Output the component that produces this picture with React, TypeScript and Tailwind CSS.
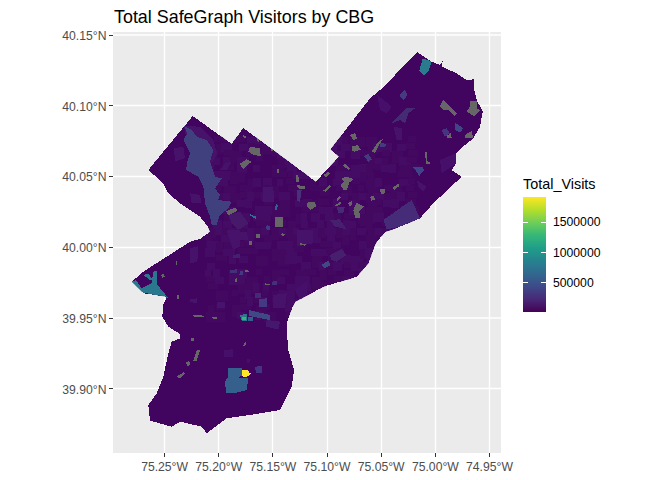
type Patch = [number, number, string, string]

const OUTLINE =
  '192.7,116 231.7,144 243.3,128 300,170 315.7,181.7 339,156.7 330.7,149.3 370,98.3 380,90 395,75 417.3,52.3 431.7,61.7 440,65 442.7,60.7 441.7,66.7 456.7,73.3 466.7,80 474.3,79.3 474,88.3 476.7,100 482.7,111.7 480,126.7 473.3,138.3 463,146.7 456,154 456,163.3 451.7,170 461.7,176.7 433.3,203.3 420,218.3 400,226.7 385,232 380,238 375.7,243 368.3,263.3 356.7,276.7 340,281.7 323.3,286.7 308.3,295 295,301.7 290,313.3 287.3,321.7 286.7,330 288.3,350 294,370 291.7,386.7 280,410 250,415 226.7,418.3 206.7,433.3 201.7,426.7 180,421.7 171.7,426.7 150,420.7 148.3,405 156.7,393.3 163.3,376.7 168.3,353.3 171.7,341.7 180,338.3 180,334 168.3,326.7 162.3,316.7 163.3,305 166.7,296.7 155,295 143.3,293.3 131.7,281.7 143.3,271.7 166.7,256.7 190,241.7 200,239 210,231.7 208,226.7 200,216.7 180,203.3 168,193 163,183 148.3,170'

const GREY = '#666666'

// coordinates are read off 3x crops: [crop x, crop y, colour, points]
const PATCHES: Patch[] = [
  // northwest
  [100, 30, '#46126a', '252,288 300,290 340,330 352,372 335,400 300,400 262,340'],
  [100, 30, '#46126a', '222,355 250,350 255,385 225,395'],
  [100, 30, '#46126a', '270,490 300,495 305,520 275,520'],
  [100, 30, '#41407f', '252,288 275,300 290,320 320,330 340,360 330,395 345,440 365,445 345,475 360,495 355,510 395,515 385,535 360,555 350,585 335,585 330,560 315,520 310,470 295,440 258,420 262,395 270,370 250,330 262,310'],
  [100, 30, '#47196b', '385,555 420,545 445,580 415,600 395,580'],
  [100, 30, '#46146b', '490,470 520,470 522,515 490,515'],
  [100, 30, '#48307a', '590,480 605,480 600,515 590,512'],
  [100, 30, '#443a83', '500,585 512,590 510,600 498,598'],
  [100, 30, '#46126a', '375,400 395,395 380,420 360,420'],
  [100, 30, '#46126a', '400,610 440,605 445,630 400,630'],
  [100, 30, '#2d7190', '450,552 468,560 470,568 452,558'],
  [100, 30, '#35608d', '528,522 534,525 530,540 524,540'],
  // northeast
  [300, 30, '#46106a', '232,195 275,230 260,250 240,240'],
  [300, 30, '#46126a', '280,290 305,295 305,330 290,330'],
  [300, 30, '#46106a', '420,390 468,370 468,400 425,430'],
  [300, 30, '#46126a', '350,450 380,470 370,485 355,470'],
  [300, 30, '#463a80', '298,195 315,180 322,195 310,212'],
  [300, 30, '#452a74', '275,280 320,235 345,235 325,250 315,280 300,270'],
  [300, 30, '#3f4488', '340,412 368,410 372,420 358,438'],
  [300, 30, '#414487', '465,278 490,295 480,308 465,300'],
  [300, 30, '#43367f', '425,300 440,295 450,310 435,320'],
  [300, 30, '#463a80', '238,335 262,345 250,352 240,350'],
  [300, 30, '#443a80', '192,378 205,372 216,388 205,395'],
  [300, 30, '#462b78', '250,570 335,510 360,565 300,590 260,598'],
  [300, 30, '#46206f', '90,570 120,568 140,598 105,590'],
  [300, 30, '#462a75', '110,530 135,530 130,548 115,548'],
  [300, 30, '#2a7b8e', '368,85 395,95 385,125 372,137 358,122'],
  // south and west
  [100, 230, '#46126a', '270,55 295,48 292,95 270,100'],
  [100, 230, '#46126a', '380,0 420,0 420,50 400,60'],
  [100, 230, '#46176e', '500,270 540,275 535,298 497,290'],
  [100, 230, '#443a83', '478,208 500,205 502,232 478,232'],
  [100, 230, '#45307a', '395,120 412,118 412,130 395,130'],
  [100, 230, '#45307a', '420,125 430,122 430,135 420,135'],
  [100, 230, '#452a78', '465,190 482,190 482,205 465,205'],
  [100, 230, '#46146c', '350,215 375,215 375,235 350,235'],
  [100, 230, '#46126a', '520,195 560,190 555,235 525,235'],
  [100, 230, '#46106a', '372,360 398,358 398,382 372,382'],
  [100, 230, '#443483', '465,410 485,408 485,428 468,430'],
  [100, 230, '#46106a', '440,388 450,388 448,400 440,400'],
  [100, 230, '#45307a', '515,155 530,153 530,165 515,165'],
  [100, 230, '#46146c', '270,208 290,205 290,220 270,215'],
  [100, 230, '#3f4a85', '447,240 510,255 510,270 447,258'],
  [100, 230, '#35608d', '445,262 458,262 458,272 445,272'],
  [100, 230, '#2a788e', '420,255 440,252 440,272 425,272'],
  [100, 230, '#35b779', '427,260 438,260 438,270 427,270'],
  [100, 230, '#2a788e', '95,155 108,150 125,175 155,160 160,125 170,122 172,165 190,185 205,205 165,195 130,188 105,175'],
  [100, 230, '#2a788e', '130,135 145,130 158,150 150,150'],
  [100, 230, '#35608d', '385,413 425,413 426,438 410,442 445,445 440,480 410,488 378,488 375,455 385,440'],
  [100, 230, '#fde725', '426,420 445,420 447,428 453,430 445,438 432,442 426,435'],
  // centre and river edge
  [230, 230, '#3f4a85', '275,105 295,92 302,105 285,115'],
  [230, 230, '#46206f', '300,75 335,58 350,75 320,95 305,90'],
  [230, 230, '#45307a', '125,155 142,152 140,165 125,165'],
  [230, 230, '#46126a', '200,0 250,0 250,40 200,50'],
  [230, 230, '#46126a', '130,200 165,195 165,235 130,235'],
  [230, 230, '#46106a', '195,180 235,150 230,195 210,210'],
  [230, 230, '#45206f', '8,75 30,72 30,85 10,85'],
  [230, 230, '#45307a', '0,120 20,118 22,130 0,130'],
  [230, 230, '#443a83', '30,125 38,122 38,135 28,135'],
  // no-data tracts
  [100, 30, GREY, '450,350 480,355 482,378 462,375 445,365'],
  [100, 30, GREY, '418,402 440,388 455,395 430,416'],
  [100, 30, GREY, '530,420 538,415 538,428 530,428'],
  [100, 30, GREY, '590,430 598,445 595,458 588,455'],
  [100, 30, GREY, '590,465 612,468 612,478 595,475'],
  [100, 30, GREY, '622,518 630,515 630,530 622,528'],
  [100, 30, GREY, '525,562 548,562 548,592 525,590'],
  [100, 30, GREY, '378,545 405,532 412,542 385,556'],
  [100, 30, GREY, '468,612 480,612 480,624 468,624'],
  [100, 30, GREY, '428,315 438,320 436,325 430,322'],
  [100, 30, GREY, '470,330 478,325 475,338'],
  [100, 30, GREY, '510,355 520,360 515,365'],
  [100, 30, GREY, '545,610 555,612 552,618 544,616'],
  [300, 30, GREY, '430,208 445,225 470,250 465,258 445,240 430,240 420,228'],
  [300, 30, GREY, '510,212 530,212 530,235 540,240 522,258 500,245 510,230'],
  [300, 30, GREY, '495,315 515,303 520,325 495,325'],
  [300, 30, GREY, '440,318 452,310 456,325 442,325'],
  [300, 30, GREY, '375,365 380,365 380,390 392,400 378,403'],
  [300, 30, GREY, '150,315 165,310 172,325 160,330'],
  [300, 30, GREY, '155,350 172,345 183,358 165,365 155,362'],
  [300, 30, GREY, '215,365 235,335 250,325 240,340 225,368'],
  [300, 30, GREY, '128,405 135,402 150,415 145,420'],
  [300, 30, GREY, '70,435 85,425 90,432 78,443'],
  [300, 30, GREY, '125,445 140,440 160,447 148,458 140,480 130,480 122,465 132,455'],
  [300, 30, GREY, '70,482 88,465 92,470 76,486'],
  [300, 30, GREY, '0,468 15,468 15,478 0,478'],
  [300, 30, GREY, '240,478 255,478 255,490 243,492'],
  [300, 30, GREY, '278,472 295,462 298,468 282,480'],
  [300, 30, GREY, '210,500 222,498 225,508 214,512'],
  [300, 30, GREY, '110,508 120,498 122,503 113,513'],
  [300, 30, GREY, '105,525 122,515 125,520 108,530'],
  [300, 30, GREY, '145,520 155,512 157,525 148,528'],
  [300, 30, GREY, '20,518 45,515 48,530 30,540 22,532'],
  [300, 30, GREY, '170,518 192,530 178,545 180,565 165,563 160,540'],
  [100, 230, GREY, '184,135 190,130 194,140 186,145'],
  [100, 230, GREY, '228,95 232,90 232,105 228,105'],
  [100, 230, GREY, '232,195 238,195 238,208 232,208'],
  [100, 230, GREY, '280,255 315,257 310,262 282,262'],
  [100, 230, GREY, '337,260 350,262 350,268 338,268'],
  [100, 230, GREY, '272,325 280,322 282,332 274,332'],
  [100, 230, GREY, '290,362 300,360 290,392 280,392'],
  [100, 230, GREY, '258,398 268,392 270,405 262,408'],
  [100, 230, GREY, '230,440 250,427 255,430 240,445'],
  [100, 230, GREY, '432,340 438,335 436,348 430,348'],
  [100, 230, GREY, '404,148 412,143 412,155 405,158'],
  [100, 230, GREY, '468,12 480,12 480,24 468,24'],
  [100, 230, GREY, '448,33 456,33 456,46 448,46'],
  [100, 230, GREY, '545,10 555,12 552,18 545,16'],
  [100, 230, GREY, '600,40 618,42 616,47 602,45'],
  [100, 230, GREY, '435,120 447,122 445,126 435,125'],
  [100, 230, GREY, '495,160 510,162 508,166 497,165'],
]

const toPage = (ox: number, oy: number, pts: string) =>
  pts
    .split(' ')
    .map((p) => {
      const [x, y] = p.split(',').map(Number)
      return `${ox + x / 3},${oy + y / 3}`
    })
    .join(' ')

// faint block-group mosaic over the dense centre
const MOSAIC: { x: number; y: number; w: number; h: number; c: string }[] = []
for (let gx = 0; gx < 26; gx++) {
  for (let gy = 0; gy < 26; gy++) {
    const hash = (gx * 73 + gy * 151 + gx * gy * 17) % 97
    if (hash % 3 === 0) continue
    MOSAIC.push({
      x: 205 + gx * 8 + (hash % 4),
      y: 135 + gy * 7 + (hash % 3),
      w: 6 + (hash % 7),
      h: 5 + (hash % 6),
      c: hash % 2 ? '#430860' : '#450c65',
    })
  }
}

const GRID_X = [164.5, 218.5, 272.5, 327.5, 381.5, 435.5, 489.5]
const GRID_Y = [35, 105.5, 176.5, 247.5, 318, 388.5]
const LAT = ['40.15°N', '40.10°N', '40.05°N', '40.00°N', '39.95°N', '39.90°N']
const LON = ['75.25°W', '75.20°W', '75.15°W', '75.10°W', '75.05°W', '75.00°W', '74.95°W']
const LEGEND = ['1500000', '1000000', '500000']

function MapPanel() {
  return (
    <svg viewBox="113 32 388 421" className="block w-[388px] h-[421px] bg-[#ebebeb]">
      <defs>
        <clipPath id="city">
          <polygon points={OUTLINE} />
        </clipPath>
      </defs>
      {GRID_X.map((x) => (
        <line key={x} x1={x} x2={x} y1={32} y2={453} stroke="#fff" strokeWidth={1.3} />
      ))}
      {GRID_Y.map((y) => (
        <line key={y} x1={113} x2={501} y1={y} y2={y} stroke="#fff" strokeWidth={1.3} />
      ))}
      <polygon points={OUTLINE} fill="#41055f" shapeRendering="crispEdges" />
      <g clipPath="url(#city)" shapeRendering="crispEdges">
        {MOSAIC.map((m, i) => (
          <rect key={i} x={m.x} y={m.y} width={m.w} height={m.h} fill={m.c} />
        ))}
        {PATCHES.map(([ox, oy, fill, pts], i) => (
          <polygon key={i} points={toPage(ox, oy, pts)} fill={fill} />
        ))}
      </g>
    </svg>
  )
}

function Legend() {
  return (
    <div className="ml-[22px] pt-[173px]">
      <div className="h-[22px] mb-[2px] text-[14.4px] leading-[22px] text-black">Total_Visits</div>
      <div className="flex">
        <div className="relative w-[23px] h-[115px] bg-[linear-gradient(to_top,#440154,#482878,#3e4a89,#31688e,#26828e,#1f9e89,#35b779,#6ece58,#b5de2b,#fde725)]">
          <div className="absolute left-0 top-[25px] w-[4.6px] h-px bg-white" />
          <div className="absolute right-0 top-[25px] w-[4.6px] h-px bg-white" />
          <div className="absolute left-0 top-[55px] w-[4.6px] h-px bg-white" />
          <div className="absolute right-0 top-[55px] w-[4.6px] h-px bg-white" />
          <div className="absolute left-0 top-[85px] w-[4.6px] h-px bg-white" />
          <div className="absolute right-0 top-[85px] w-[4.6px] h-px bg-white" />
        </div>
        <div className="ml-[7px] pt-[10.4px]">
          {LEGEND.map((v) => (
            <div key={v} className="h-[30.2px] flex items-center text-[12.2px] text-black">
              {v}
            </div>
          ))}
        </div>
      </div>
    </div>
  )
}

export default function App() {
  return (
    <div className="w-[672px] h-[480px] bg-white flex font-['Liberation_Sans',Arial,sans-serif] overflow-hidden">
      <div className="w-[501px] shrink-0">
        <div className="h-[32px] pl-[114px] pt-[7px] text-[17.9px] leading-[21px] text-black whitespace-nowrap">
          Total SafeGraph Visitors by CBG
        </div>
        <div className="flex">
          <div className="w-[113px] -mt-[4px] flex flex-col gap-[56.8px]">
            {LAT.map((t) => (
              <div key={t} className="h-[14px] flex items-center justify-end gap-[2.5px] text-[12.2px] text-[#4d4d4d]">
                <span className="mt-[2px]">{t}</span>
                <span className="w-[4px] h-px bg-[#333333]" />
              </div>
            ))}
          </div>
          <MapPanel />
        </div>
        <div className="flex pl-[137.5px]">
          {LON.map((t) => (
            <div key={t} className="w-[54.17px] shrink-0 flex flex-col items-center text-[12.2px] text-[#4d4d4d] whitespace-nowrap">
              <span className="w-px h-[4px] bg-[#333333]" />
              <span className="mt-[2px] leading-[16px]">{t}</span>
            </div>
          ))}
        </div>
      </div>
      <Legend />
    </div>
  )
}
